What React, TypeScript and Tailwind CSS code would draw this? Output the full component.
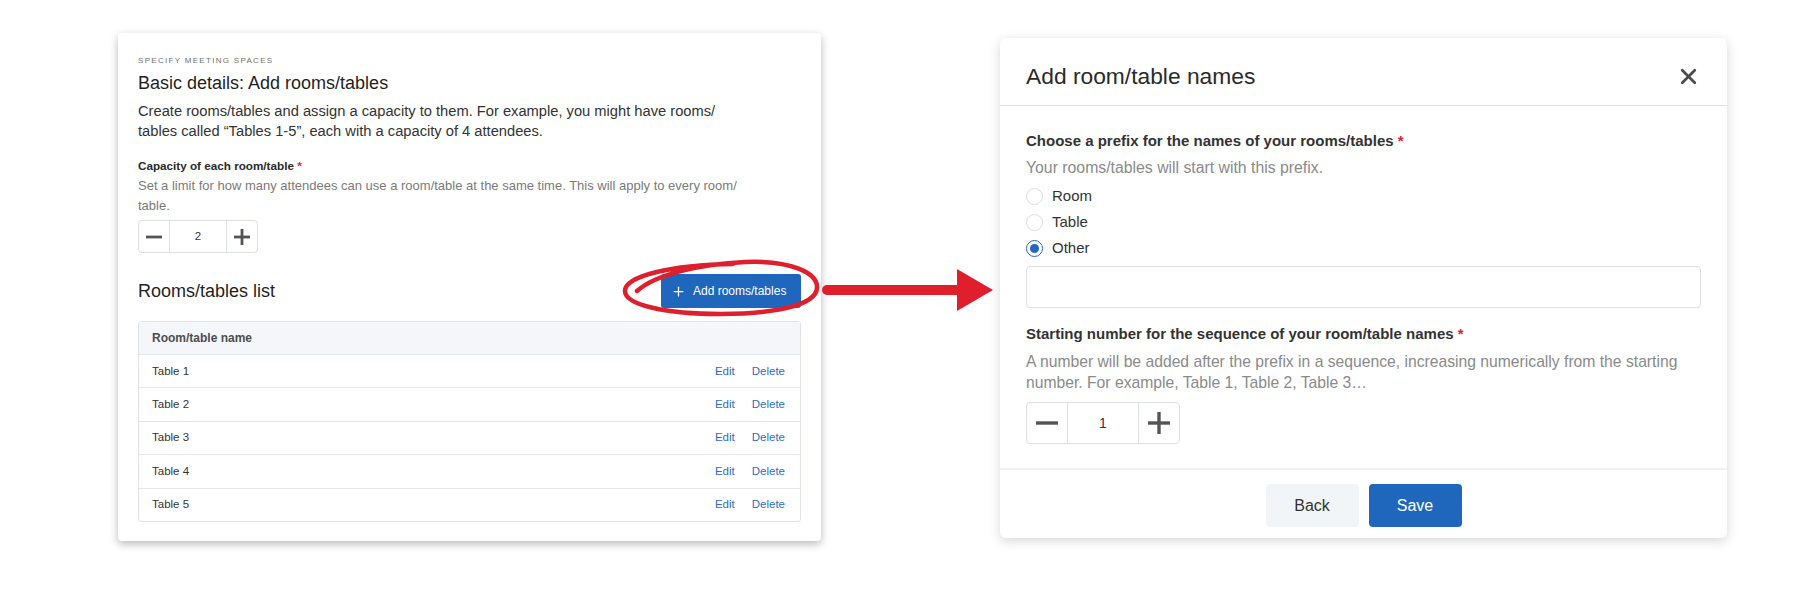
import { X, Plus } from 'lucide-react'

const font = { fontFamily: '"Liberation Sans", Arial, sans-serif' }

function MinusIcon({ size, w }: { size: number; w: number }) {
  return (
    <svg width={size} height={size} viewBox={`0 0 ${size} ${size}`}>
      <line x1="0" y1={size / 2} x2={size} y2={size / 2} stroke="#555" strokeWidth={w} />
    </svg>
  )
}

function PlusIcon({ size, w }: { size: number; w: number }) {
  return (
    <svg width={size} height={size} viewBox={`0 0 ${size} ${size}`}>
      <line x1="0" y1={size / 2} x2={size} y2={size / 2} stroke="#555" strokeWidth={w} />
      <line x1={size / 2} y1="0" x2={size / 2} y2={size} stroke="#555" strokeWidth={w} />
    </svg>
  )
}

function Stepper({ value, big }: { value: number; big?: boolean }) {
  const s = big ? 22 : 16
  const w = big ? 3.4 : 2.8
  return (
    <div className={`flex ${big ? 'h-[42px]' : 'h-[33px]'} w-fit rounded-[4px] border border-[#dcdfe3] bg-white`}>
      <div className={`flex items-center justify-center border-r border-[#dcdfe3] ${big ? 'w-[41px]' : 'w-[31px]'}`}>
        <MinusIcon size={s} w={w} />
      </div>
      <div className={`flex items-center justify-center ${big ? 'w-[70px] text-[14px]' : 'w-[56px] text-[11.5px]'} text-[#333]`}>
        {value}
      </div>
      <div className={`flex items-center justify-center border-l border-[#dcdfe3] ${big ? 'w-[41px]' : 'w-[31px]'}`}>
        <PlusIcon size={s} w={w} />
      </div>
    </div>
  )
}

function Radio({ label, checked }: { label: string; checked?: boolean }) {
  return (
    <div className="flex h-[26px] items-center gap-[9px]">
      {checked ? (
        <span className="flex h-[17px] w-[17px] items-center justify-center rounded-full border-[1.5px] border-[#2369bf]">
          <span className="h-[9px] w-[9px] rounded-full bg-[#2369bf]" />
        </span>
      ) : (
        <span className="h-[17px] w-[17px] rounded-full border border-[#dcdcdc] bg-white" />
      )}
      <span className="text-[15px] text-[#333]">{label}</span>
    </div>
  )
}

// hand drawn red loop around the add button
function Annotation() {
  return (
    <svg
      className="pointer-events-none absolute left-[-40px] top-[-18px]"
      width="200"
      height="61"
      viewBox="0 0 200 61"
      fill="none"
    >
      <path
        d="M16 35 C 35 18, 80 8, 124 6 C 170 4, 197 17, 196 32 C 195 50, 150 58, 100 58 C 45 58, 4 49, 4 35 C 4 20, 50 9, 112 8"
        stroke="#df1f2d"
        strokeWidth="4.5"
        strokeLinecap="round"
      />
    </svg>
  )
}

export default function App() {
  const rows = ['Table 1', 'Table 2', 'Table 3', 'Table 4', 'Table 5']

  return (
    <div className="flex h-[611px] w-[1811px] items-start bg-white pl-[118px] pt-[33px]" style={font}>
      {/* left: basic details card */}
      <div className="flex w-[703px] flex-col rounded-[4px] bg-white px-[20px] pb-[19px] pt-[22px] shadow-[0_3px_8px_rgba(0,0,0,0.28)]">
        <p className="text-[8px] leading-[12px] tracking-[1.3px] text-[#707070]">SPECIFY MEETING SPACES</p>
        <h1 className="mt-[4px] text-[18px] leading-[24px] text-[#1f1f1f]">Basic details: Add rooms/tables</h1>
        <p className="mt-[6px] text-[14.7px] leading-[20px] text-[#333]">
          Create rooms/tables and assign a capacity to them. For example, you might have rooms/
          <br />
          tables called “Tables 1-5”, each with a capacity of 4 attendees.
        </p>

        <p className="mt-[16px] text-[11.7px] font-semibold leading-[18px] text-[#2a2a2a]">
          Capacity of each room/table <span className="text-[#e0242f]">*</span>
        </p>
        <p className="mt-[1px] text-[13px] leading-[20px] text-[#7a7a7a]">
          Set a limit for how many attendees can use a room/table at the same time. This will apply to every room/
          <br />
          table.
        </p>
        <div className="mt-[4px]">
          <Stepper value={2} />
        </div>

        <div className="mt-[21px] flex h-[34px] items-center justify-between">
          <h2 className="text-[18px] text-[#1f1f1f]">Rooms/tables list</h2>
          <div className="relative">
            <button className="flex h-[34px] w-[140px] items-center gap-[7px] rounded-[3px] bg-[#1f66bd] pl-[10px] text-[12px] text-white">
              <Plus className="h-[15px] w-[15px]" strokeWidth={2} />
              Add rooms/tables
            </button>
            <Annotation />
          </div>
        </div>

        <div className="mt-[13px] rounded-[3px] border border-[#dfe3e8]">
          <div className="flex h-[32px] items-center bg-[#f4f6f9] px-[13px] text-[12px] font-semibold text-[#4d4d4d]">
            Room/table name
          </div>
          {rows.map((r) => (
            <div key={r} className="flex h-[33.4px] items-center justify-between border-t border-[#e4e7eb] pl-[13px] pr-[15px] text-[11.5px]">
              <span className="text-[#333]">{r}</span>
              <div className="flex gap-[17px] text-[#2a6ec2]">
                <span>Edit</span>
                <span>Delete</span>
              </div>
            </div>
          ))}
        </div>
      </div>

      {/* arrow */}
      <svg className="mt-[232px] shrink-0" width="179" height="50" viewBox="0 0 179 50">
        <line x1="6" y1="25" x2="140" y2="25" stroke="#e01f2d" strokeWidth="10" strokeLinecap="round" />
        <polygon points="136,4 136,46 172,25" fill="#e01f2d" />
      </svg>

      {/* right: modal */}
      <div className="mt-[5px] flex h-[500px] w-[727px] flex-col rounded-[6px] bg-white shadow-[0_3px_12px_rgba(0,0,0,0.16)]">
        <div className="flex h-[68px] shrink-0 items-center justify-between border-b border-[#dcdfe4] pl-[26px] pr-[26px] pt-[10px]">
          <h2 className="text-[22.8px] text-[#2a2a2a]">Add room/table names</h2>
          <X className="h-[25px] w-[25px] text-[#4a4a4a]" strokeWidth={2.6} />
        </div>

        <div className="flex flex-1 flex-col px-[26px] pt-[25px]">
          <p className="text-[15px] font-semibold leading-[20px] text-[#333]">
            Choose a prefix for the names of your rooms/tables <span className="text-[#e0242f]">*</span>
          </p>
          <p className="mt-[6px] text-[15.8px] leading-[22px] text-[#8a8a8a]">Your rooms/tables will start with this prefix.</p>
          <div className="mt-[4px] flex flex-col">
            <Radio label="Room" />
            <Radio label="Table" />
            <Radio label="Other" checked />
          </div>
          <div className="mt-[5px] h-[42px] w-full rounded-[4px] border border-[#dcdfe3] bg-white" />

          <p className="mt-[16px] text-[15px] font-semibold leading-[20px] text-[#333]">
            Starting number for the sequence of your room/table names <span className="text-[#e0242f]">*</span>
          </p>
          <p className="mt-[8px] text-[15.7px] leading-[20.5px] text-[#8a8a8a]">
            A number will be added after the prefix in a sequence, increasing numerically from the starting
            <br />
            number. For example, Table 1, Table 2, Table 3…
          </p>
          <div className="mt-[9px]">
            <Stepper value={1} big />
          </div>
        </div>

        <div className="flex h-[70px] shrink-0 items-start justify-center gap-[10px] border-t-2 border-[#f0f1f3] pt-[14px]">
          <button className="h-[43px] w-[93px] rounded-[4px] bg-[#f2f5f8] text-[16px] text-[#333]">Back</button>
          <button className="h-[43px] w-[93px] rounded-[4px] bg-[#1f66bd] text-[16px] text-white">Save</button>
        </div>
      </div>
    </div>
  )
}
